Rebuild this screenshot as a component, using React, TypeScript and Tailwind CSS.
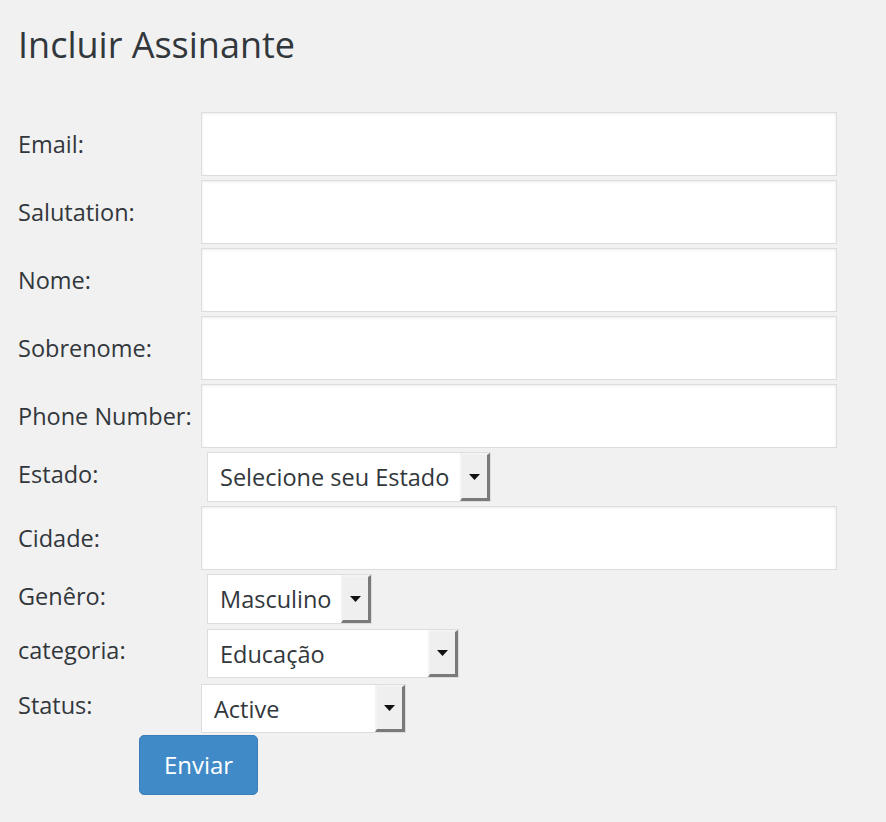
type Field = {
  label: string;
  kind: "input" | "select";
  value?: string;
  width?: string;
  offset?: string;
};

const fields: Field[] = [
  { label: "Email:", kind: "input" },
  { label: "Salutation:", kind: "input" },
  { label: "Nome:", kind: "input" },
  { label: "Sobrenome:", kind: "input" },
  { label: "Phone Number:", kind: "input" },
  { label: "Estado:", kind: "select", value: "Selecione seu Estado", width: "w-[284px] h-[50px]", offset: "ml-[6px]" },
  { label: "Cidade:", kind: "input" },
  { label: "Genêro:", kind: "select", value: "Masculino", width: "w-[165px] h-[50px]", offset: "ml-[6px]" },
  { label: "categoria:", kind: "select", value: "Educação", width: "w-[252px] h-[49px]", offset: "ml-[6px] mt-[1px]" },
  { label: "Status:", kind: "select", value: "Active", width: "w-[205px] h-[49px]", offset: "mt-[2px]" },
];

const FakeSelect = ({ value, width, offset }: { value: string; width: string; offset: string }) => {
  return (
    <div className={`flex bg-white border border-[#dddddd] ${width} ${offset}`}>
      <select
        className="flex-1 min-w-0 appearance-none bg-transparent pl-[12px] text-[23.5px] leading-[32px] text-[#32373c] outline-none"
        defaultValue={value}
      >
        <option>{value}</option>
      </select>
      <div className="w-[30px] h-full flex items-center justify-center bg-[#efefef] border-t-2 border-l-2 border-t-[#f3f3f3] border-l-[#f3f3f3] border-r-[3px] border-b-[3px] border-r-[#7a7a7a] border-b-[#7a7a7a]">
        <svg width="11" height="6" viewBox="0 0 11 6">
          <polygon points="0,0 11,0 5.5,6" fill="#111" />
        </svg>
      </div>
    </div>
  );
};

export default function App() {
  return (
    <div
      className="min-h-screen bg-[#f1f1f1] pl-[18px] pt-[20px]"
      style={{ fontFamily: '"Open Sans", "Noto Sans", sans-serif' }}
    >
      <h1 className="text-[36px] leading-[50px] text-[#32373c] font-normal">Incluir Assinante</h1>
      <form className="mt-[42px] flex flex-col gap-[4px]" onSubmit={(e) => e.preventDefault()}>
        {fields.map((f) => (
          <div key={f.label} className="flex items-center">
            <label
              className={`w-[183px] shrink-0 text-[23.5px] leading-[32px] text-[#32373c] ${
                f.kind === "select" ? "pb-[6px]" : ""
              }`}
            >
              {f.label}
            </label>
            {f.kind === "input" ? (
              <input
                type="text"
                className="w-[636px] h-[64px] bg-white border border-[#dddddd] shadow-[inset_0_1px_3px_rgba(0,0,0,0.08)] outline-none px-3 text-[24px]"
              />
            ) : (
              <FakeSelect value={f.value ?? ""} width={f.width ?? ""} offset={f.offset ?? ""} />
            )}
          </div>
        ))}
        <div className="-mt-[2px] pl-[121px]">
          <button
            type="submit"
            className="w-[119px] h-[60px] rounded-[5px] bg-[#408ac8] border border-[#3a7dba] text-white text-[24px] font-medium leading-[32px]"
          >
            Enviar
          </button>
        </div>
      </form>
    </div>
  );
}
